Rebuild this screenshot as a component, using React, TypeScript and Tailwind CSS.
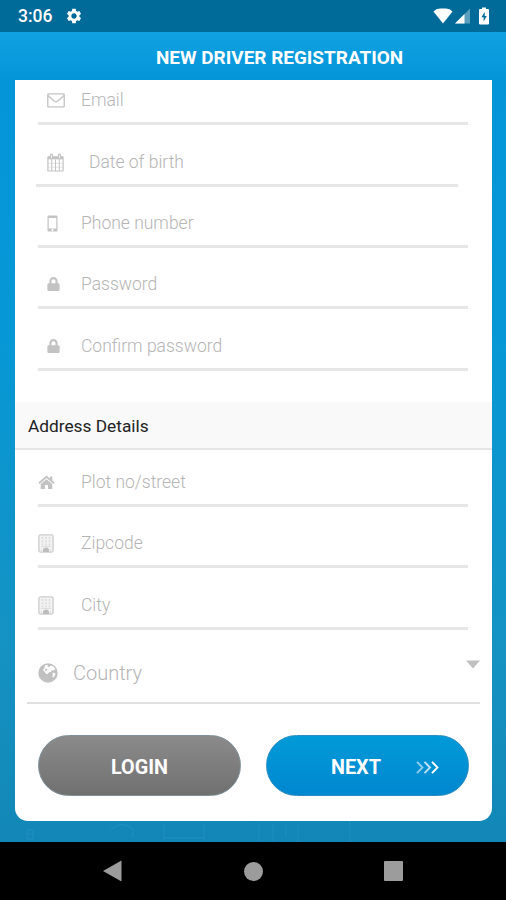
import React from 'react';
import clsx from 'clsx';
import { FaLock } from 'react-icons/fa';
import { MdSettings } from 'react-icons/md';

const EnvelopeIcon = () => (
  <svg width="18" height="15" viewBox="0 0 18 15" fill="none" stroke="currentColor" strokeWidth="1.3">
    <rect x="0.8" y="0.9" width="16.4" height="13" rx="0.6" />
    <path d="M1 2.500L7.500 8.300Q9 9.400 10.500 8.300L17 2.500" />
  </svg>
);

const CalendarIcon = () => (
  <svg width="17" height="19" viewBox="0 0 17 19" fill="none" stroke="currentColor">
    <rect x="0.900" y="3.800" width="15.200" height="14.200" rx="0.600" strokeWidth="1.200" />
    <path d="M1 10.300h15M1 14.100h15" strokeWidth="0.500" />
    <path d="M4.700 6.500V18M8.500 6.500V18M12.300 6.500V18" strokeWidth="1" />
    <path d="M1 5h15" strokeWidth="2.600" />
    <path d="M4.500 2v3M12.500 2v3" strokeWidth="3.200" strokeLinecap="round" />
    <path d="M4.500 2v3M12.500 2v3" stroke="white" strokeWidth="0.800" />
  </svg>
);

const MobileIcon = () => (
  <svg width="11" height="17" viewBox="0 0 11 17">
    <path
      fill="currentColor"
      fillRule="evenodd"
      d="M1.500 .5h8a1 1 0 0 1 1 1v14a1 1 0 0 1-1 1h-8a1 1 0 0 1-1-1v-14a1 1 0 0 1 1-1zM1.700 3v10.500h7.600V3zM5.500 13.900a1.100 1.100 0 1 0 0 2.200 1.100 1.100 0 0 0 0-2.200z"
    />
  </svg>
);

const HomeIcon = () => (
  <svg width="17" height="15" viewBox="0 0 17 15">
    <path d="M1 8.200L8.500 1.800L16 8.200" fill="none" stroke="currentColor" strokeWidth="1.800" />
    <path fill="currentColor" d="M12 1.500h2.300v5L12 4.600zM8.500 4.200L14.300 9v5H10v-4H7v4H2.700V9z" />
  </svg>
);

const BuildingIcon = () => (
  <svg width="16" height="19" viewBox="0 0 16 19" fill="none" stroke="#cdcdcd">
    <rect x="0.900" y="0.900" width="14.200" height="17.200" rx="1.500" fill="#f3f3f3" strokeWidth="1.300" />
    <path d="M4.500 3v9M8 3v9M11.500 3v9" stroke="#dedede" strokeWidth="1.800" strokeDasharray="2 1.200" />
    <path d="M3 12.500h10M3.500 18v-3M12.500 18v-3" stroke="#dedede" />
    <path d="M5 18v-1.500a3 3 0 0 1 6 0V18z" fill="#bdbdbd" stroke="none" />
  </svg>
);

const GlobeIcon = () => (
  <svg width="20" height="20" viewBox="0 0 20 20">
    <circle cx="10" cy="10" r="9.700" fill="currentColor" />
    <path fill="white" d="M7 2.200L10 2l-.6 1.600 1.800.4 1.600-1.600 3 1.300 1.600 2.600-1.600 1.200-2-.3-.7 1.500-2.400.8-1.200 1.700-2-.7-.8-1.700L4.900 7l1.300-1.500z" />
    <path fill="white" d="M14.600 9.700l2.500.3.100 2-1.700 2.600-1.200-.6.500-2.100z" />
    <path fill="currentColor" d="M7.300 5.400l2 .600-.7 1.700-1.500.2z" />
  </svg>
);

interface FieldProps {
  icon: React.ReactNode;
  label: string;
  className?: string;
  iconClass?: string;
}

const Field = ({ icon, label, className, iconClass }: FieldProps) => (
  <div className={clsx('flex items-end border-b-[3px] border-b-[#e6e6e6] text-[#c3c3c3]', className)}>
    <div className={clsx('mb-3 flex h-5 shrink-0 items-center', iconClass)}>{icon}</div>
    <span className="mb-3 text-[17.5px] font-light leading-5 whitespace-nowrap text-[#b5b5b5]">{label}</span>
  </div>
);

const StatusBar = () => (
  <div className="flex h-8 items-center bg-[#006a99] pl-[18px] pr-[17px] text-white">
    <span className="text-[17.5px] font-medium leading-5">3:06</span>
    <MdSettings className="ml-[13px] h-[18px] w-[18px]" />
    <div className="ml-auto flex items-center">
      <svg width="20" height="16" viewBox="0 0 20 16" fill="currentColor">
        <path d="M0.500 3.500Q3 0.700 7 0.500H13Q17 0.700 19.500 3.500L10 15.500z" />
      </svg>
      <svg className="ml-[2px]" width="16" height="16" viewBox="0 0 16 16" fill="currentColor">
        <path opacity="0.350" d="M15 0.500V15.500H0z" />
        <path d="M9.500 6V15.500H0z" />
      </svg>
      <svg className="ml-[8px]" width="10" height="18" viewBox="0 0 10 18">
        <path fill="currentColor" d="M3 0.500h4V2h2a1 1 0 0 1 1 1v13.500a1 1 0 0 1-1 1H1a1 1 0 0 1-1-1V3a1 1 0 0 1 1-1h2z" />
        <path fill="#006a99" d="M5.700 5L2.400 10.200h2.200V14.500L7.700 9H5.700z" />
      </svg>
    </div>
  </div>
);

const NavBar = () => (
  <div className="flex h-[58px] items-center bg-black pl-[103px] text-[#9c9c9c]">
    <svg width="19" height="22" viewBox="0 0 19 22" fill="currentColor">
      <path d="M18.500 0.500v21L0 11z" />
    </svg>
    <div className="ml-[122px] h-[19px] w-[19px] rounded-full bg-[#9c9c9c]" />
    <div className="ml-[121px] h-[20px] w-[19px] rounded-[1px] bg-[#9c9c9c]" />
  </div>
);

const App = () => {
  return (
    <div className="flex h-[900px] w-[506px] flex-col overflow-hidden bg-black font-['Roboto',sans-serif]">
      <StatusBar />

      <div className="flex h-[810px] flex-col bg-[linear-gradient(180deg,#10a1e2_0px,#0395d8_48px,#0698d6_300px,#1592c2_620px,#1287b7_810px)]">
        <h1 className="h-12 pl-[156px] pt-[14px] text-[18.95px] font-bold leading-6 whitespace-nowrap text-white">
          NEW DRIVER REGISTRATION
        </h1>

        <div className="ml-[15px] h-[741px] w-[477px] rounded-b-[13px] bg-white">
          <Field className="ml-[23px] mr-6 h-[45px]" icon={<EnvelopeIcon />} label="Email" iconClass="ml-[9px] w-[34px]" />
          <Field className="ml-[21px] mr-[34px] h-[62px]" icon={<CalendarIcon />} label="Date of birth" iconClass="ml-[11px] w-[42px]" />
          <Field className="ml-[23px] mr-6 h-[61px]" icon={<MobileIcon />} label="Phone number" iconClass="ml-[9px] w-[34px]" />
          <Field className="ml-[23px] mr-6 h-[61px]" icon={<FaLock className="h-[14px] w-[13px]" />} label="Password" iconClass="ml-[9px] w-[34px]" />
          <Field className="ml-[23px] mr-6 h-[62px]" icon={<FaLock className="h-[14px] w-[13px]" />} label="Confirm password" iconClass="ml-[9px] w-[34px]" />

          <div className="mt-[31px] flex h-12 items-center border-b-2 border-[#e6e6e6] bg-[#f9f9f9] pl-[13px] pt-[2px]">
            <h2 className="text-[17.3px] leading-5 whitespace-nowrap text-[#222222]">Address Details</h2>
          </div>

          <Field className="ml-[23px] mr-6 h-[57px]" icon={<HomeIcon />} label="Plot no/street" iconClass="w-[43px]" />
          <Field className="ml-[23px] mr-6 h-[61px]" icon={<BuildingIcon />} label="Zipcode" iconClass="w-[43px]" />
          <Field className="ml-[23px] mr-6 h-[62px]" icon={<BuildingIcon />} label="City" iconClass="w-[43px]" />

          <div className="ml-3 mr-3 flex h-[74px] items-center border-b-2 border-[#e0e0e0] pl-[11px] pt-[14px] text-[#c0c0c0]">
            <GlobeIcon />
            <span className="ml-[15px] text-[20px] font-light leading-6 text-[#b5b5b5]">Country</span>
            <svg className="mb-[18px] ml-auto" width="14" height="9" viewBox="0 0 14 9" fill="#c0c0c0">
              <path d="M0 0.500h14L7 8.500z" />
            </svg>
          </div>

          <div className="mt-[31px] flex gap-[25px] pl-[23px] text-[19.8px] font-bold text-white">
            <button className="h-[61px] w-[203px] rounded-full border border-[#7f919b] bg-linear-to-b from-[#8b8b8b] to-[#707070] pt-[4px]">
              LOGIN
            </button>
            <button className="flex h-[61px] w-[203px] items-center rounded-full border border-[#2c8dc0] bg-linear-to-b from-[#029ad8] to-[#0187cf] pl-[64px] pt-[4px]">
              NEXT
              <svg className="ml-[35px]" width="23" height="13" viewBox="0 0 23 13" fill="none" stroke="currentColor" strokeWidth="1.900">
                <path opacity="0.550" d="M1 0.800L6.500 6.500L1 12.200" />
                <path opacity="0.750" d="M8.500 0.800L14 6.500L8.500 12.200" />
                <path d="M16 0.800L21.500 6.500L16 12.200" />
              </svg>
            </button>
          </div>
        </div>

        {/* faint line art at the bottom of the backdrop */}
        <svg width="506" height="21" viewBox="0 0 506 21" fill="none" stroke="#5cc0e6" strokeOpacity="0.180">
          <path d="M27 9h6v9h-6zM27 13h6M164 3v16M204 3v16M164 17h40M111 8q12-9 22 0v9M259 3v17M273 3v17M286 3v12M298 3v18M350 0v21" />
        </svg>
      </div>

      <NavBar />
    </div>
  );
};

export default App;
